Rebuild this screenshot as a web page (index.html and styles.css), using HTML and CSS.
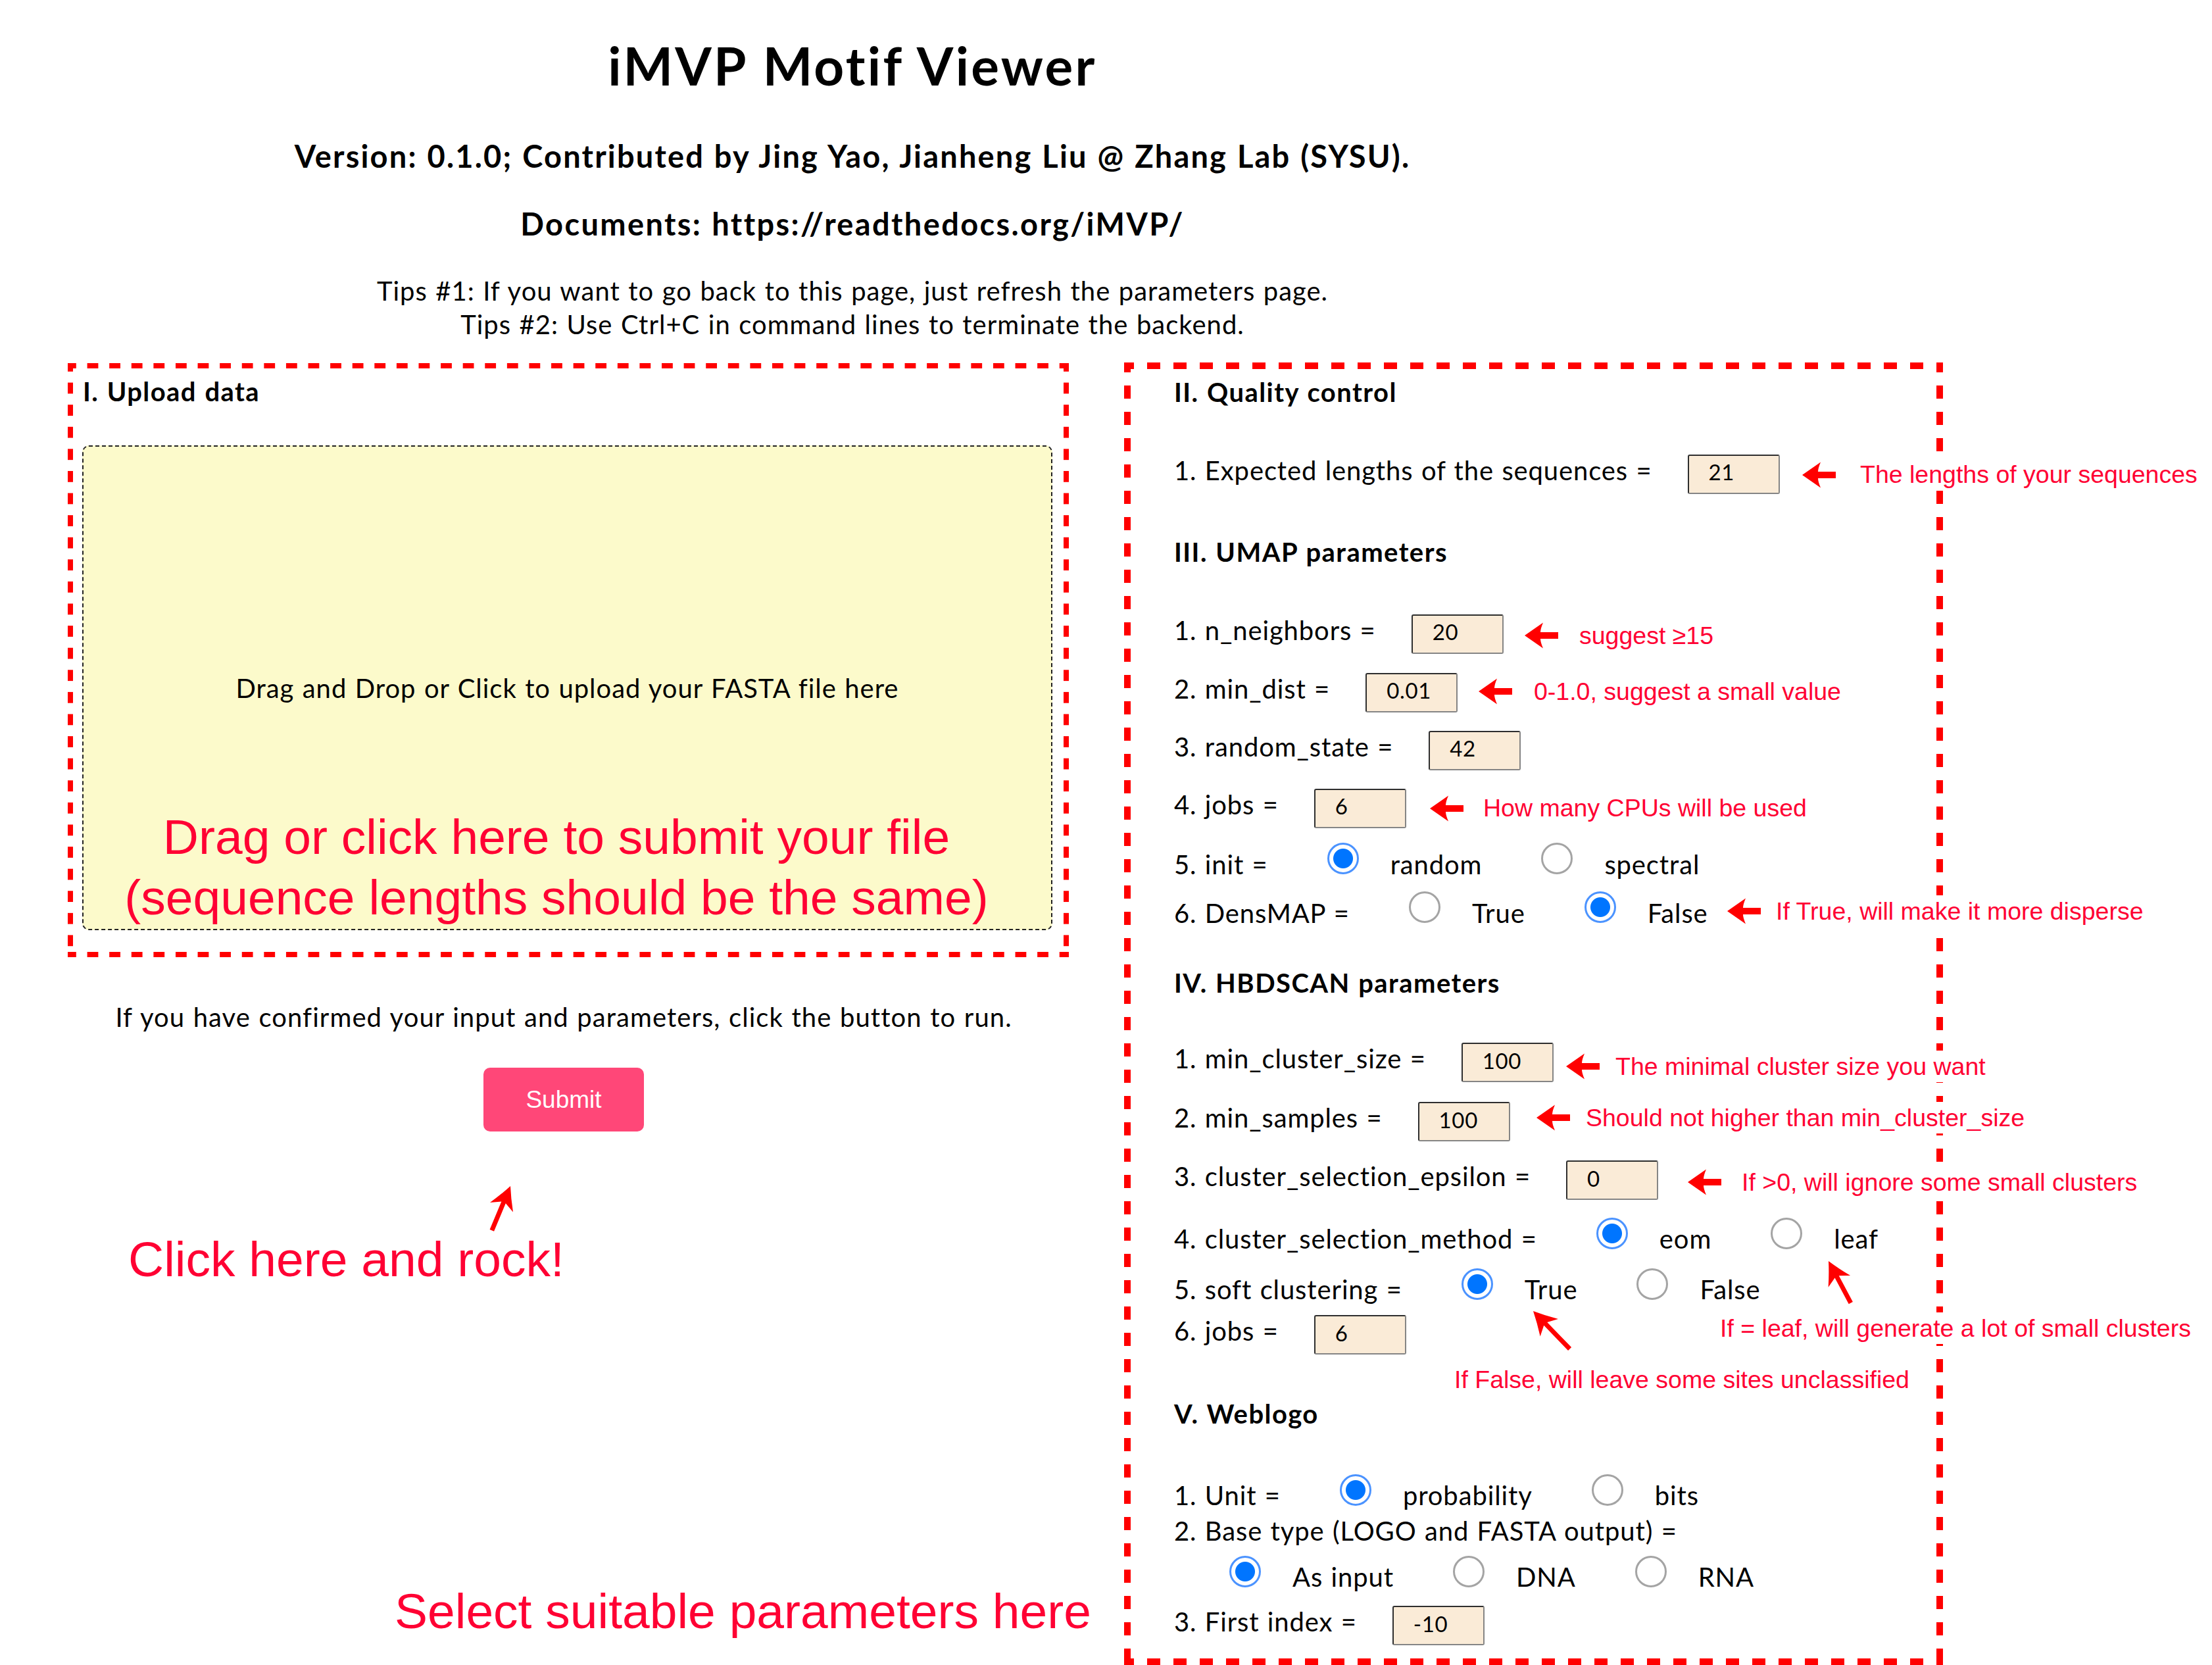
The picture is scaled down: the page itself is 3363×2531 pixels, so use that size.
FILE: index.html
```html
<!DOCTYPE html>
<html lang="en">
<head>
<meta charset="utf-8">
<title>iMVP Motif Viewer</title>
<link rel="stylesheet" href="styles.css">
</head>
<body>
<div class="page">
  <header class="header">
    <h1 class="title">iMVP Motif Viewer</h1>
    <h3 class="subtitle">Version: 0.1.0; Contributed by Jing Yao, Jianheng Liu @ Zhang Lab (SYSU).</h3>
    <h3 class="subtitle docs">Documents: https://readthedocs.org/iMVP/</h3>
    <p class="tips">Tips #1: If you want to go back to this page, just refresh the parameters page.<br>Tips #2: Use Ctrl+C in command lines to terminate the backend.</p>
  </header>

  <main class="columns">
    <section class="left-col">
      <div class="upload-panel">
        <h4 class="sec-title">I. Upload data</h4>
        <div class="dropzone">Drag and Drop or Click to upload your FASTA file here</div>
      </div>
      <div class="below">
        <p class="confirm">If you have confirmed your input and parameters, click the button to run.</p>
        <button class="submit" type="button">Submit</button>
      </div>
    </section>

    <section class="params-panel">
      <h4 class="sec-title">II. Quality control</h4>
      <div class="field g59"><span class="lbl">1. Expected lengths of the sequences =</span><input class="num" type="text" value="21"></div>

      <h4 class="sec-title g64">III. UMAP parameters</h4>
      <div class="field g59"><span class="lbl">1. n_neighbors =</span><input class="num" type="text" value="20"></div>
      <div class="field g29"><span class="lbl">2. min_dist =</span><input class="num" type="text" value="0.01"></div>
      <div class="field g28"><span class="lbl">3. random_state =</span><input class="num" type="text" value="42"></div>
      <div class="field g28"><span class="lbl">4. jobs =</span><input class="num" type="text" value="6"></div>
      <div class="field radio-row g22"><span class="lbl">5. init =</span><span class="radio on"></span><span class="opt">random</span><span class="radio"></span><span class="opt">spectral</span></div>
      <div class="field radio-row g14"><span class="lbl">6. DensMAP =</span><span class="radio"></span><span class="opt">True</span><span class="radio on"></span><span class="opt">False</span></div>

      <h4 class="sec-title g54">IV. HBDSCAN parameters</h4>
      <div class="field g55"><span class="lbl">1. min_cluster_size =</span><input class="num" type="text" value="100"></div>
      <div class="field g30"><span class="lbl">2. min_samples =</span><input class="num" type="text" value="100"></div>
      <div class="field g29"><span class="lbl">3. cluster_selection_epsilon =</span><input class="num" type="text" value="0"></div>
      <div class="field radio-row g26"><span class="lbl">4. cluster_selection_method =</span><span class="radio on"></span><span class="opt">eom</span><span class="radio"></span><span class="opt">leaf</span></div>
      <div class="field radio-row g17"><span class="lbl">5. soft clustering =</span><span class="radio on"></span><span class="opt">True</span><span class="radio"></span><span class="opt">False</span></div>
      <div class="field g11"><span class="lbl">6. jobs =</span><input class="num" type="text" value="6"></div>

      <h4 class="sec-title g66">V. Weblogo</h4>
      <div class="field radio-row g55"><span class="lbl">1. Unit =</span><span class="radio on"></span><span class="opt">probability</span><span class="radio"></span><span class="opt">bits</span></div>
      <div class="field g2"><span class="lbl">2. Base type (LOGO and FASTA output) =</span></div>
      <div class="field radio-row indent g1"><span class="radio on"></span><span class="opt">As input</span><span class="radio"></span><span class="opt">DNA</span><span class="radio"></span><span class="opt">RNA</span></div>
      <div class="field g16"><span class="lbl">3. First index =</span><input class="num" type="text" value="-10"></div>
    </section>
  </main>

  <div class="notes">
    <p class="big drag">Drag or click here to submit your file<br>(sequence lengths should be the same)</p>
    <p class="big click">Click here and rock!</p>
    <p class="big select">Select suitable parameters here</p>

    <span class="note n-qc">The lengths of your sequences</span>
    <span class="note n-s15">suggest ≥15</span>
    <span class="note n-dist">0-1.0, suggest a small value</span>
    <span class="note n-cpu">How many CPUs will be used</span>
    <span class="note n-disp">If True, will make it more disperse</span>
    <span class="note n-mcs">The minimal cluster size you want</span>
    <span class="note n-ms">Should not higher than min_cluster_size</span>
    <span class="note n-eps">If &gt;0, will ignore some small clusters</span>
    <span class="note n-leaf">If = leaf, will generate a lot of small clusters</span>
    <span class="note n-false">If False, will leave some sites unclassified</span>
  </div>

  <svg class="arrows" width="3363" height="2531" viewBox="0 0 3363 2531" aria-hidden="true">
    <defs>
      <path id="larr" d="M0,0 L28,-19.5 Q24,-10 24,-5 L51,-5 L51,5 L24,5 Q24,10 28,19.5 Z"/>
    </defs>
    <g fill="#ff0000">
      <use href="#larr" x="2740" y="722"/>
      <use href="#larr" x="2318" y="966"/>
      <use href="#larr" x="2248" y="1051"/>
      <use href="#larr" x="2174" y="1229"/>
      <use href="#larr" x="2626" y="1385"/>
      <use href="#larr" x="2381" y="1621"/>
      <use href="#larr" x="2336" y="1699"/>
      <use href="#larr" x="2566" y="1797"/>
      <path transform="translate(776 1803) rotate(-67.3)" d="M0,0 Q-17,-8 -35,-19 L-27,-3.5 L-73,-3.5 L-73,3.5 L-27,3.5 L-35,19 Q-17,8 0,0 Z"/>
      <path transform="translate(2780 1917) rotate(-118)" d="M0,0 Q-17,-8 -35,-19 L-27,-3.5 L-72,-3.5 L-72,3.5 L-27,3.5 L-35,19 Q-17,8 0,0 Z"/>
      <path transform="translate(2331 1993) rotate(-134)" d="M0,0 Q-17,-8 -35,-19 L-27,-3.5 L-80,-3.5 L-80,3.5 L-27,3.5 L-35,19 Q-17,8 0,0 Z"/>
    </g>
  </svg>
</div>
</body>
</html>
```

FILE: styles.css
```css
* { box-sizing: border-box; }

html, body {
  margin: 0;
  padding: 0;
  background: #fff;
}

body {
  font-family: Lato, "Open Sans", sans-serif;
  color: #000;
  width: 3363px;
  height: 2531px;
  overflow: hidden;
  letter-spacing: 0.32px;
  word-spacing: 1.28px;
}

.page {
  position: relative;
  width: 3363px;
  height: 2531px;
}

/* ---------- header ---------- */
.header {
  width: 2592px;
  text-align: center;
  padding-top: 51px;
}

.title {
  margin: 0;
  font-size: 80px;
  line-height: 96px;
  font-weight: 700;
  letter-spacing: 0.041em;
}

.subtitle {
  margin: 61.8px 0 0;
  font-size: 47px;
  line-height: 56px;
  font-weight: 700;
  letter-spacing: 0.046em;
}

.subtitle.docs {
  margin-top: 47px;
  letter-spacing: 0.05em;
}

.tips {
  margin: 49px 0 0;
  font-size: 40px;
  line-height: 51px;
  letter-spacing: 0.025em;
}

/* ---------- columns ---------- */
.columns {
  display: flex;
  align-items: flex-start;
  gap: 84px;
  margin-top: 32.5px;
  padding-left: 103px;
}

.left-col {
  width: 1522px;
  margin-top: 1px;
}

.upload-panel {
  width: 1522px;
  height: 903px;
  padding: 18.5px 22px 0;
  background:
    linear-gradient(90deg, #ff0000 17px, transparent 17px) -4px 0 / 33.6px 8px repeat-x,
    linear-gradient(90deg, #ff0000 17px, transparent 17px) -4px 100% / 33.6px 8px repeat-x,
    linear-gradient(180deg, #ff0000 17px, transparent 17px) 0 -4px / 8px 33.6px repeat-y,
    linear-gradient(180deg, #ff0000 17px, transparent 17px) 100% -4px / 8px 33.6px repeat-y;
}

.sec-title {
  margin: 0;
  height: 60px;
  font-size: 40px;
  line-height: 48px;
  font-weight: 700;
  letter-spacing: 0.036em;
}

.upload-panel .sec-title { padding-left: 1px; }

.dropzone {
  margin-top: 46.5px;
  width: 1475px;
  height: 737px;
  border: 2px dashed #222;
  border-radius: 10px;
  background: #fcfacb;
  display: flex;
  align-items: center;
  justify-content: center;
  font-size: 40px;
  line-height: 48px;
  letter-spacing: 0.024em;
}

.below {
  padding-right: 14px;
  text-align: center;
}

.confirm {
  margin: 66.5px 0 0;
  font-size: 40px;
  line-height: 48px;
  letter-spacing: 0.0264em;
}

.submit {
  display: block;
  margin: 53.5px auto 0;
  width: 244px;
  height: 97px;
  border: 0;
  border-radius: 10px;
  background: #ff4778;
  color: #fff;
  font-family: "Liberation Sans", Arial, sans-serif;
  font-size: 37px;
  letter-spacing: 0;
  padding: 0;
}

/* ---------- parameters panel ---------- */
.params-panel {
  width: 1245px;
  height: 1980px;
  padding: 20.5px 0 0 76px;
  display: flex;
  flex-direction: column;
  background:
    linear-gradient(90deg, #ff0000 20px, transparent 20px) -5px 0 / 40px 10px repeat-x,
    linear-gradient(90deg, #ff0000 20px, transparent 20px) -5px 100% / 40px 10px repeat-x,
    linear-gradient(180deg, #ff0000 20px, transparent 20px) 0 -5px / 10px 40px repeat-y,
    linear-gradient(180deg, #ff0000 20px, transparent 20px) 100% -5px / 10px 40px repeat-y;
}

.field {
  display: flex;
  align-items: flex-start;
  height: 60px;
  flex: none;
  font-size: 40px;
  line-height: 48px;
  letter-spacing: 0.022em;
  white-space: nowrap;
}

.num {
  flex: none;
  width: 140px;
  height: 60px;
  margin: 0 0 0 54px;
  padding: 0 0 7px 30px;
  border: 2px solid;
  border-color: #2e2e2e #858585 #858585 #2e2e2e;
  border-radius: 3px;
  background: #faebd7;
  font-family: Lato, "Open Sans", sans-serif;
  font-size: 33px;
  letter-spacing: 0.02em;
  color: #000;
}

.radio-row .lbl,
.radio-row .opt { margin-top: 8.5px; }

.radio {
  flex: none;
  width: 48px;
  height: 48px;
  margin-left: 90px;
  border-radius: 50%;
  border: 3px solid #a4a4a4;
  background: #fff;
}

.radio.on {
  border-color: #4b93ff;
  background: radial-gradient(circle, #0075ff 0 14.5px, #fff 15.5px);
}

.indent .radio:first-child { margin-left: 84px; }

.opt { margin-left: 48px; }

/* vertical rhythm of the parameter rows */
.g1  { margin-top: 1.5px; }
.g2  { margin-top: 2.5px; }
.g11 { margin-top: 11.5px; }
.g14 { margin-top: 14px; }
.g16 { margin-top: 16.5px; }
.g17 { margin-top: 17px; }
.g22 { margin-top: 22.5px; }
.g26 { margin-top: 26.5px; }
.g28 { margin-top: 28px; }
.g29 { margin-top: 29px; }
.g30 { margin-top: 30px; }
.g54 { margin-top: 54.5px; }
.g55 { margin-top: 55.5px; }
.g59 { margin-top: 59px; }
.g64 { margin-top: 64px; }
.g66 { margin-top: 66px; }

/* ---------- annotation layer ---------- */
.notes {
  position: absolute;
  left: 0;
  top: 0;
  width: 0;
  height: 0;
}

.big {
  position: absolute;
  margin: 0;
  font-family: "Liberation Sans", Arial, sans-serif;
  font-size: 75px;
  line-height: 92px;
  letter-spacing: 0;
  word-spacing: 0;
  color: #ff0033;
  white-space: nowrap;
}

.big.drag {
  left: 146px;
  top: 1226px;
  width: 1400px;
  text-align: center;
}

.big.click { left: 195px; top: 1868px; }
.big.select { left: 600px; top: 2403px; }

.note {
  position: absolute;
  font-family: "Liberation Sans", Arial, sans-serif;
  font-size: 37.5px;
  line-height: 48px;
  letter-spacing: 0;
  word-spacing: 0;
  color: #ff0033;
  background: #fff;
  white-space: nowrap;
  padding: 0 4px;
}

.n-qc    { left: 2824px; top: 697px; }
.n-s15   { left: 2397px; top: 942px; }
.n-dist  { left: 2328px; top: 1027px; }
.n-cpu   { left: 2251px; top: 1204px; }
.n-disp  { left: 2696px; top: 1361px; }
.n-mcs   { left: 2452px; top: 1597px; }
.n-ms    { left: 2407px; top: 1675px; }
.n-eps   { left: 2644px; top: 1773px; }
.n-leaf  { left: 2611px; top: 1995px; }
.n-false { left: 2207px; top: 2073px; }

.arrows {
  position: absolute;
  left: 0;
  top: 0;
  pointer-events: none;
}
```
